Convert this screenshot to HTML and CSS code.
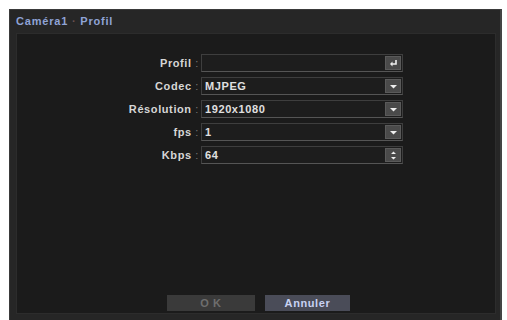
FILE: index.html
```html
<html>
  <head>
    <link rel="stylesheet" href="styles.css">
  </head>
  <body>
    <div class="window">
      <div class="title">Caméra1 <span class="dot">·</span> Profil</div>
      <div class="panel">
        <div class="form">
          <div class="row">
            <label>Profil <span class="colon">:</span></label>
            <div class="field">
              <span class="value"></span>
              <span class="btn">
                <svg width="9" height="9" viewBox="0 0 9 9"><path d="M7 1 V5 H3" fill="none" stroke="#eee" stroke-width="1.6"/><path d="M1 5 L3.5 2.5 V7.5 Z" fill="#eee"/></svg>
              </span>
            </div>
          </div>
          <div class="row">
            <label>Codec <span class="colon">:</span></label>
            <div class="field">
              <span class="value">MJPEG</span>
              <span class="btn"><svg width="9" height="9" viewBox="0 0 9 9"><path d="M1 3 H8 L4.5 6.5 Z" fill="#eee"/></svg></span>
            </div>
          </div>
          <div class="row">
            <label>Résolution <span class="colon">:</span></label>
            <div class="field">
              <span class="value">1920x1080</span>
              <span class="btn"><svg width="9" height="9" viewBox="0 0 9 9"><path d="M1 3 H8 L4.5 6.5 Z" fill="#eee"/></svg></span>
            </div>
          </div>
          <div class="row">
            <label>fps <span class="colon">:</span></label>
            <div class="field">
              <span class="value">1</span>
              <span class="btn"><svg width="9" height="9" viewBox="0 0 9 9"><path d="M1 3 H8 L4.5 6.5 Z" fill="#eee"/></svg></span>
            </div>
          </div>
          <div class="row">
            <label>Kbps <span class="colon">:</span></label>
            <div class="field">
              <span class="value">64</span>
              <span class="btn"><svg width="9" height="11" viewBox="0 0 9 11"><path d="M2 4 L4.5 1.5 L7 4 Z M2 7 H7 L4.5 9.5 Z" fill="#eee"/></svg></span>
            </div>
          </div>
        </div>
        <div class="actions">
          <button class="ok">O K</button>
          <button class="cancel">Annuler</button>
        </div>
      </div>
    </div>
  </body>
</html>
```

FILE: styles.css
```css
body {
  margin: 0;
  background: #fff;
  overflow: hidden;
  font-family: "Liberation Sans", Arial, sans-serif;
  font-weight: bold;
  letter-spacing: 0.6px;
}

/* window ================================ */
.window {
  margin: 9px 0 0 9px;
  width: 493px;
  height: 320px;
  background: #262626;
  border-left: 1px solid #3a3a3a;
  border-right: 2px solid #444;
  border-top: 1px solid #3a3a3a;
  box-sizing: border-box;
  display: flex;
  flex-direction: column;
}
.title {
  height: 23px;
  line-height: 22px;
  padding-left: 6px;
  font-size: 11px;
  color: #8fa3d6;
  letter-spacing: 0.8px;
}
.title .dot { color: #6a5050; }

.panel {
  margin: 0 4px 0 6px;
  height: 279px;
  background: #1b1b1b;
  border: 1px solid #2c2c2c;
  display: flex;
  flex-direction: column;
  justify-content: space-between;
}

/* form ================================== */
.form {
  display: flex;
  flex-direction: column;
  gap: 5px;
  padding-top: 20px;
}
.row {
  display: flex;
  align-items: center;
}
.row label {
  width: 182px;
  text-align: right;
  font-size: 11px;
  color: #d6d6d6;
  padding-right: 2px;
}
.colon { color: #777; font-weight: normal; }
.field {
  width: 200px;
  height: 16px;
  border: 1px solid #3e3e3e;
  border-bottom-color: #555;
  background: #1d1d1d;
  display: flex;
  align-items: center;
  justify-content: space-between;
}
.value {
  padding-left: 3px;
  font-size: 11px;
  color: #e0e0e0;
}
.btn {
  width: 16px;
  height: 14px;
  margin-right: 1px;
  background: #4a4a4a;
  border: 1px solid #5a5a5a;
  box-sizing: border-box;
  display: flex;
  align-items: center;
  justify-content: center;
}

/* buttons =============================== */
.actions {
  display: flex;
  gap: 10px;
  padding-left: 150px;
  padding-bottom: 2px;
}
.actions button {
  height: 16px;
  border: none;
  font-family: inherit;
  font-size: 11px;
  font-weight: bold;
  letter-spacing: 0.6px;
}
.ok {
  width: 88px;
  background: #3a3a3a;
  color: #6e6e6e;
}
.cancel {
  width: 85px;
  background: #4a4c58;
  color: #c8d2f2;
}
```
